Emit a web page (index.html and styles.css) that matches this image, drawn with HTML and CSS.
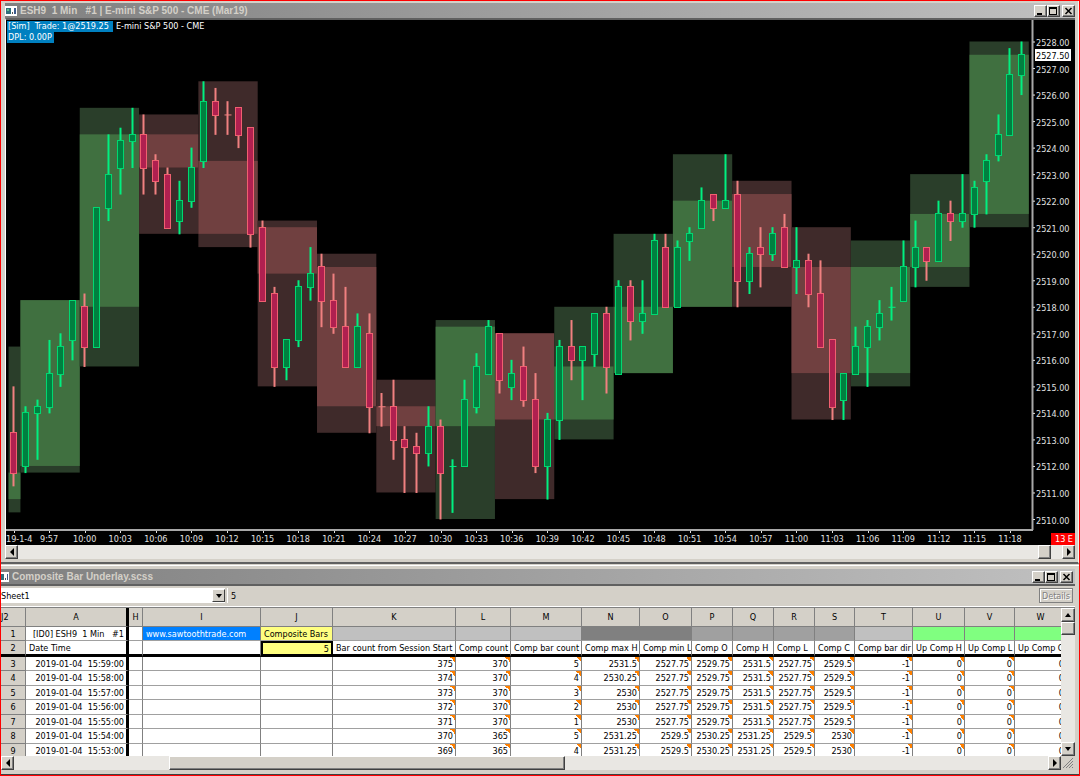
FILE: index.html
```
<!DOCTYPE html>
<html lang="en">
<head>
    <meta charset="UTF-8">
    <meta name="viewport" content="width=device-width, initial-scale=1.0">
    <title>ESH9 1 Min #1 | Composite Bar Underlay</title>
    <link rel="stylesheet" href="styles.css">
</head>
<body>

    <section class="window chart-window">
        <header class="titlebar">
            <svg class="app-icon" viewBox="0 0 12 10" width="12" height="10">
                <rect width="12" height="10" fill="#fff"/>
                <rect x="1" y="2" width="5" height="6" fill="#2f6f7c"/>
                <rect x="2" y="3" width="2" height="2" fill="#5fc08a"/>
                <rect x="7" y="6" width="1" height="2" fill="#555"/>
                <rect x="9" y="2" width="2" height="6" fill="#3c5a8c"/>
            </svg>
            <h1>ESH9&nbsp; 1 Min&nbsp;&nbsp; #1 | E-mini S&amp;P 500 - CME (Mar19)</h1>
            <div class="window-buttons">
                <button aria-label="Minimize"><svg viewBox="0 0 11 10" width="11" height="10"><rect x="2" y="7" width="5" height="2"/></svg></button>
                <button aria-label="Maximize"><svg viewBox="0 0 11 10" width="11" height="10"><path d="M1 1h8v8h-8zM2 3v5h6v-5z" fill-rule="evenodd"/></svg></button>
                <button aria-label="Close"><svg viewBox="0 0 11 10" width="11" height="10"><path d="M2.500 2l6 6M8.500 2l-6 6" stroke="#000" stroke-width="1.500"/></svg></button>
            </div>
        </header>

        <div class="chart-area">
            <svg id="chart" viewBox="6 20 1069 525"></svg>
            <div class="trade-info">
                <p><span class="tag">[Sim]&nbsp; Trade: 1@2519.25&nbsp;</span> E-mini S&amp;P 500 - CME</p>
                <p><span class="tag">DPL: 0.00P</span></p>
            </div>
        </div>

        <div class="scrollbar">
            <button aria-label="Scroll left"><svg viewBox="0 0 8 8" width="8" height="8"><path d="M6 0v8l-4-4z"/></svg></button>
            <div class="track"><div class="thumb small"></div></div>
            <button aria-label="Scroll right"><svg viewBox="0 0 8 8" width="8" height="8"><path d="M2 0v8l4-4z"/></svg></button>
        </div>
    </section>

    <section class="window sheet-window">
        <header class="titlebar">
            <svg class="app-icon" viewBox="4 0 8 10" width="8" height="10">
                <rect width="12" height="10" fill="#fff"/>
                <rect x="4" y="2" width="3" height="6" fill="#2f6f7c"/>
                <rect x="8" y="6" width="1" height="2" fill="#555"/>
                <rect x="10" y="2" width="1" height="6" fill="#3c5a8c"/>
            </svg>
            <h1>Composite Bar Underlay.scss</h1>
            <div class="window-buttons">
                <button aria-label="Minimize"><svg viewBox="0 0 11 10" width="11" height="10"><rect x="2" y="7" width="5" height="2"/></svg></button>
                <button aria-label="Maximize"><svg viewBox="0 0 11 10" width="11" height="10"><path d="M1 1h8v8h-8zM2 3v5h6v-5z" fill-rule="evenodd"/></svg></button>
                <button aria-label="Close"><svg viewBox="0 0 11 10" width="11" height="10"><path d="M2.500 2l6 6M8.500 2l-6 6" stroke="#000" stroke-width="1.500"/></svg></button>
            </div>
        </header>

        <div class="formula-bar">
            <div class="sheet-picker">
                <select aria-label="Sheet"><option>Sheet1</option></select>
                <span class="arrow"><svg viewBox="0 0 8 8" width="8" height="8"><path d="M1 2h6l-3 4z"/></svg></span>
            </div>
            <input type="text" aria-label="Formula" value="5">
            <button class="details" disabled>Details</button>
        </div>

        <div class="sheet-body">
            <div class="grid">
                <table>
                    <colgroup id="cols"></colgroup>
                    <thead id="head"></thead>
                    <tbody id="rows"></tbody>
                </table>
            </div>
            <div class="scrollbar vertical">
                <button aria-label="Scroll up"><svg viewBox="0 0 8 8" width="8" height="8"><path d="M1 6h6l-3-4z"/></svg></button>
                <div class="track"><div class="thumb"></div></div>
                <button aria-label="Scroll down"><svg viewBox="0 0 8 8" width="8" height="8"><path d="M1 2h6l-3 4z"/></svg></button>
            </div>
        </div>

        <div class="scrollbar">
            <button aria-label="Scroll left"><svg viewBox="0 0 8 8" width="8" height="8"><path d="M6 0v8l-4-4z"/></svg></button>
            <div class="track"><div class="thumb wide"></div></div>
            <button aria-label="Scroll right"><svg viewBox="0 0 8 8" width="8" height="8"><path d="M2 0v8l4-4z"/></svg></button>
            <svg class="grip" viewBox="0 0 14 13" width="14" height="13"><path d="M2 12l10-10M5 12l7-7M8 12l4-4M11 12l1-1" stroke="#808080"/></svg>
        </div>
    </section>

    <script src="script.js"></script>
</body>
</html>
```

FILE: styles.css
```
* {
    box-sizing: border-box;
}
body {
    margin: 0;
    height: 100vh;
    display: flex;
    flex-direction: column;
    overflow: hidden;
    border: 1px solid #f00;
    background-color: #d4d0c8;
    font-family: "DejaVu Sans Condensed", "DejaVu Sans", Tahoma, sans-serif;
    font-size: 9px;
    color: #000;
}
h1, p {
    margin: 0;
}
button, select, input {
    font: inherit;
    color: inherit;
    margin: 0;
    padding: 0;
    border-radius: 0;
}
button {
    display: flex;
    align-items: center;
    justify-content: center;
    background-color: #d4d0c8;
    border: 1px solid;
    border-color: #fff #404040 #404040 #fff;
    box-shadow: inset -1px -1px 0 #808080;
}

/* windows */
.window {
    display: flex;
    flex-direction: column;
}
.chart-window {
    padding: 2px 3px 3px 4px;
    border-bottom: 2px solid #606060;
    border-right: 1px solid #f4f3f0;
}
.sheet-window {
    flex: 1;
    min-height: 0;
    border-top: 1px solid #fff;
    border-bottom: 1px solid #404040;
    padding: 3px 4px 4px 0;
    margin-top: 1px;
}
.titlebar {
    display: flex;
    align-items: center;
    height: 15px;
    flex: none;
    background: linear-gradient(to right, #808080, #c0c0c0);
}
.titlebar h1 {
    flex: 1;
    font-family: "Liberation Sans", Arial, sans-serif;
    font-size: 10px;
    line-height: 15px;
    font-weight: bold;
    color: #d4d0c8;
    white-space: nowrap;
}
.app-icon {
    margin-right: 3px;
}
.window-buttons {
    display: flex;
}
.sheet-window .window-buttons {
    padding-right: 2px;
}
.window-buttons button {
    width: 13px;
    height: 12px;
}
.window-buttons button:last-child {
    margin-left: 2px;
}

/* chart */
.chart-area {
    position: relative;
    border-top: 2px solid #606060;
    border-left: 1px solid #fff;
    background-color: #000;
}
#chart {
    display: block;
    width: 100%;
}
#chart text {
    fill: #e0e0e0;
    font-size: 9px;
}
.trade-info {
    position: absolute;
    top: 1px;
    left: 1px;
    color: #fff;
    line-height: 11px;
    white-space: nowrap;
}
.tag {
    display: inline-block;
    padding: 0 2px 0 1px;
    background-color: #0080c0;
}

/* scrollbars */
.scrollbar {
    display: flex;
    flex: none;
    height: 14px;
    background-color: #d4d0c8;
}
.scrollbar button {
    width: 13px;
    height: 14px;
    flex: none;
}
.track {
    flex: 1;
    display: flex;
    background-color: #e9e7e3;
}
.thumb {
    background-color: #d4d0c8;
    border: 1px solid;
    border-color: #fff #404040 #404040 #fff;
    box-shadow: inset -1px -1px 0 #808080;
}
.thumb.small {
    width: 13px;
    margin-left: auto;
    margin-right: 11px;
}
.thumb.wide {
    width: 396px;
    margin-left: 15%;
}
.vertical {
    flex-direction: column;
    width: 14px;
    height: auto;
}
.vertical button {
    width: 14px;
}
.vertical .thumb {
    width: 14px;
    height: 13px;
}

/* formula bar */
.formula-bar {
    display: flex;
    flex: none;
    height: 23px;
    padding: 2px 2px 3px 0;
    gap: 2px;
    border-top: 2px solid #606060;
    border-bottom: 1px solid #fff;
}
.sheet-picker {
    display: flex;
    width: 224px;
    padding: 1px 0;
    background-color: #fff;
}
.sheet-picker select {
    flex: 1;
    appearance: none;
    border: none;
    background-color: #fff;
}
.arrow {
    display: flex;
    align-items: center;
    justify-content: center;
    width: 13px;
    background-color: #d4d0c8;
    border: 1px solid;
    border-color: #fff #404040 #404040 #fff;
}
.formula-bar input {
    flex: 1;
    border: none;
    border-left: 1px solid #fff;
    padding-left: 3px;
    background-color: transparent;
}
.formula-bar .details {
    width: 34px;
    border-color: #808080;
    box-shadow: inset 1px 1px 0 #fff;
    color: #808080;
    text-shadow: 1px 1px 0 #fff;
}

/* spreadsheet */
.sheet-body {
    flex: 1;
    min-height: 0;
    display: flex;
    border-top: 1px solid #808080;
}
.grid {
    flex: 1;
    min-width: 0;
    overflow: hidden;
    background-color: #fff;
}
table {
    table-layout: fixed;
    width: 1066px;
    border-collapse: separate;
    border-spacing: 0;
}
th, td {
    height: 14px;
    padding: 0 2px 0 3px;
    border-right: 1px solid #808080;
    border-bottom: 1px solid #a0a0a0;
    font-weight: normal;
    line-height: 12px;
    white-space: nowrap;
    overflow: hidden;
    text-align: right;
}
th {
    padding: 0;
    background-color: #d4d0c8;
    text-align: center;
    border-bottom-color: #808080;
}
thead th {
    height: 19px;
}
thead th:first-child {
    text-align: left;
}
tbody tr:nth-child(even) td {
    height: 15px;
}
td.freeze, th.freeze {
    border-right: 3px solid #000;
}
.title-row td, .label-row td {
    text-align: left;
}
.title-row td.freeze {
    text-align: right;
}
.label-row th, .label-row td {
    height: 16px;
    border-bottom: 3px solid #000;
}
td.link {
    background-color: #0080ff;
    color: #fff;
}
td.yellow {
    background-color: #ffff80;
}
.label-row td.selected {
    background-color: #ffff80;
    border: 2px solid #000;
    border-bottom-width: 3px;
    line-height: 10px;
    text-align: right;
}
td.light {
    background-color: #c0c0c0;
}
td.mid {
    background-color: #a0a0a0;
}
td.dark {
    background-color: #808080;
}
td.green {
    background-color: #80ff80;
}
/* orange corner on formula cells */
td.formula {
    background: linear-gradient(to top right, transparent 50%, #ff8000 50%) top right / 5px 5px no-repeat;
}
a {
    color: inherit;
    text-decoration: none;
}
```

FILE: script.js
```
// [first trade, high, low, last trade] in quarter-point ticks below 2528.00, one bar per minute from 9:54
const bars = [
    [59, 52, 67, 65],
    [64, 55, 65, 56], [56, 54, 63, 55], [55, 45, 56, 50], [50, 44, 52, 46], [45, 39, 48, 39],
    [40, 38, 49, 46], [46, 25, 46, 25], [25, 14, 27, 20], [19, 13, 23, 15], [15, 10, 19, 14],
    [14, 11, 23, 19], [18, 17, 23, 21], [20, 19, 28, 28], [27, 21, 29, 24], [24, 16, 25, 19],
    [18, 6, 19, 9], [9, 7, 14, 11], [11, 9, 14, 11], [10, 10, 16, 14], [13, 13, 31, 29],
    [28, 27, 39, 39], [38, 37, 52, 49], [49, 45, 51, 45], [45, 36, 46, 37], [37, 31, 39, 35],
    [34, 32, 43, 39], [39, 35, 44, 43], [43, 37, 49, 49], [49, 41, 49, 43], [44, 41, 59, 55],
    [55, 53, 58, 55], [55, 51, 63, 60], [60, 58, 68, 61], [61, 59, 68, 62], [62, 55, 64, 58],
    [58, 57, 72, 65], [64, 63, 71, 64, 1], [64, 51, 64, 54], [55, 47, 56, 49], [50, 42, 50, 43],
    [44, 44, 53, 51], [52, 48, 54, 50], [49, 46, 55, 54], [54, 50, 65, 64], [64, 56, 69, 57],
    [57, 45, 60, 46], [46, 42, 51, 48], [48, 46, 54, 46], [47, 41, 49, 41], [41, 40, 53, 49],
    [50, 36, 50, 37], [37, 36, 45, 42], [42, 36, 44, 41], [41, 29, 41, 30], [31, 29, 40, 40],
    [40, 30, 40, 31], [30, 28, 33, 29], [28, 22, 28, 24], [23, 23, 27, 25], [25, 17, 25, 24],
    [23, 21, 40, 36], [36, 31, 38, 32], [31, 28, 37, 32], [32, 28, 33, 29], [28, 26, 34, 34],
    [34, 28, 38, 33], [33, 32, 40, 38], [38, 33, 46, 46], [45, 45, 57, 55], [54, 50, 57, 50],
    [50, 43, 50, 46], [46, 42, 52, 43], [43, 39, 45, 41], [40, 37, 42, 40, 1], [39, 30, 39, 34],
    [34, 27, 37, 31], [31, 31, 36, 33], [33, 24, 33, 26], [26, 24, 30, 27], [27, 20, 28, 26],
    [26, 21, 28, 22], [21, 17, 26, 18], [17, 11, 18, 14], [14, 1, 14, 5], [5, 0, 8, 2]
];

const STEP = 11.863;
const xAt = i => 13.5 + i * STEP;
const yAt = tick => 41.5 + tick * 6.632;

let svg = '';

function rect(x, y, w, h, fill, extra) {
    svg += `<rect x="${x}" y="${y}" width="${w}" height="${h}" fill="${fill}" ${extra || ''}/>`;
}

// composite bar: high-low range in dark, open-close range over it
function composite(first, last, high, low, open, close) {
    const up = close < open;
    const x = xAt(first) - STEP / 2 + 1;
    const w = (last - first + 1) * STEP;
    const top = Math.min(open, close);
    const bottom = Math.max(open, close);
    rect(x, yAt(high), w, yAt(low) - yAt(high), up ? '#2a3e2a' : '#3f2a2a');
    rect(x, yAt(top), w, yAt(bottom) - yAt(top), up ? '#407040' : '#704040');
}

composite(0, 0, 46, 71, 69, 65);
for (let i = 1; i < bars.length; i += 5) {
    const group = bars.slice(i, i + 5);
    composite(i, i + 4,
        Math.min(...group.map(b => b[1])),
        Math.max(...group.map(b => b[2])),
        group[0][0], group[4][3]);
}

// candles
bars.forEach(([open, high, low, close, upDoji], i) => {
    const up = close < open || upDoji;
    const line = up ? '#00f080' : '#f08080';
    const x = Math.floor(xAt(i)) + 0.5;
    const top = Math.min(open, close);
    const bottom = Math.max(open, close);
    rect(x - 1, yAt(high), 2, yAt(low) - yAt(high) + 0.5, line);
    if (top === bottom) {
        rect(x - 3, yAt(top), 7, 1, line);
    } else {
        const y = Math.floor(yAt(top)) + 0.5;
        const h = Math.round(yAt(bottom) - y) + 1;
        rect(x - 3, y, 6, h, up ? '#008040' : '#b02050',
            `stroke="${up ? '#00d870' : '#f06070'}" stroke-width="1"`);
    }
});

// price axis
rect(1031.5, 20, 2, 510, '#a8a8a8');
for (let p = 2528; p >= 2510; p--) {
    const y = yAt((2528 - p) * 4);
    rect(1033, y, 2, 1, '#e0e0e0');
    svg += `<text x="1036" y="${y + 4.5}">${p}.00</text>`;
}
rect(1035, 49, 36, 12, '#fff');
svg += '<text x="1036" y="59" style="fill:#000">2527.50</text>';

// time axis
rect(6, 529, 1027, 2, '#a8a8a8');
svg += '<text x="6" y="542">19-1-4</text>';
for (let i = 0; i < bars.length; i += 3) {
    rect(Math.round(xAt(i)), 531, 1, 2, '#e0e0e0');
    if (i === 0) continue;
    const minutes = 9 * 60 + 54 + i;
    const label = Math.floor(minutes / 60) + ':' + String(minutes % 60).padStart(2, '0');
    svg += `<text x="${xAt(i)}" y="542" text-anchor="middle">${label}</text>`;
}
rect(1051, 533, 24, 12, '#f00');
svg += '<text x="1055" y="542" style="fill:#fff">13 E</text>';
document.getElementById('chart').innerHTML = svg;

// spreadsheet
const widths = [25, 103, 14, 118, 72, 123, 55, 71, 58, 52, 41, 41, 41, 40, 58, 52, 50, 52];
const letters = ['J2', 'A', 'H', 'I', 'J', 'K', 'L', 'M', 'N', 'O', 'P', 'Q', 'R', 'S', 'T', 'U', 'V', 'W'];
const labels = ['Date Time', '', '', '5', 'Bar count from Session Start', 'Comp count', 'Comp bar count', 'Comp max H',
    'Comp min L', 'Comp O', 'Comp H', 'Comp L', 'Comp C', 'Comp bar dir', 'Up Comp H', 'Up Comp L', 'Up Comp O'];
const shades = ['freeze', '', 'link', 'yellow', 'light', 'light', 'light', 'dark', 'dark', 'mid', 'mid', 'mid', 'mid', 'light', 'green', 'green', 'green'];
const data = [
    ['15:59:00', 375, 370, 5, 2531.5, 2527.75, 2529.75, 2531.5, 2527.75, 2529.5],
    ['15:58:00', 374, 370, 4, 2530.25, 2527.75, 2529.75, 2531.5, 2527.75, 2529.5],
    ['15:57:00', 373, 370, 3, 2530, 2527.75, 2529.75, 2531.5, 2527.75, 2529.5],
    ['15:56:00', 372, 370, 2, 2530, 2527.75, 2529.75, 2531.5, 2527.75, 2529.5],
    ['15:55:00', 371, 370, 1, 2530, 2527.75, 2529.75, 2531.5, 2527.75, 2529.5],
    ['15:54:00', 370, 365, 5, 2531.25, 2529.5, 2530.25, 2531.25, 2529.5, 2530],
    ['15:53:00', 369, 365, 4, 2531.25, 2529.5, 2530.25, 2531.25, 2529.5, 2530]
];

document.getElementById('cols').innerHTML = widths.map(w => `<col style="width:${w}px">`).join('');
document.getElementById('head').innerHTML = '<tr>' + letters.map((l, i) =>
    `<th scope="col" class="${i === 1 ? 'freeze' : ''}">${l}</th>`).join('') + '</tr>';

const titles = ['[ID0] ESH9&nbsp; 1 Min&nbsp;&nbsp; #1', '', '<a href="#">www.sawtoothtrade.com</a>', 'Composite Bars'];
let rows = '<tr class="title-row"><th scope="row">1</th>' + shades.map((s, i) =>
    `<td class="${s}">${titles[i] || ''}</td>`).join('') + '</tr>';
rows += '<tr class="label-row"><th scope="row">2</th>' + labels.map((l, i) =>
    `<td class="${i === 0 ? 'freeze' : i === 3 ? 'selected' : ''}">${l}</td>`).join('') + '</tr>';
data.forEach((d, n) => {
    rows += `<tr><th scope="row">${n + 3}</th><td class="freeze">2019-01-04&nbsp; ${d[0]}</td><td></td><td></td><td></td>`;
    rows += [...d.slice(1), -1, 0, 0, 0].map(v => `<td class="formula">${v}</td>`).join('') + '</tr>';
});
document.getElementById('rows').innerHTML = rows;
```
